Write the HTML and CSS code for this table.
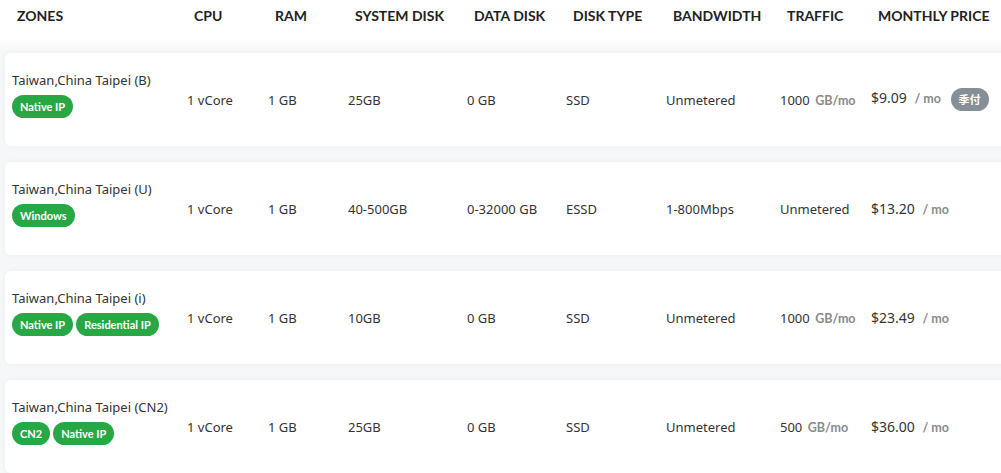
FILE: index.html
```html
<!DOCTYPE html>
<html lang="en">
<head>
    <meta charset="UTF-8">
    <meta name="viewport" content="width=device-width, initial-scale=1.0">
    <title>Pricing</title>
    <link rel="stylesheet" href="styles.css">
</head>
<body>
    <div class="price-table">
        <div class="table-head">
            <div>ZONES</div>
            <div>CPU</div>
            <div>RAM</div>
            <div>SYSTEM DISK</div>
            <div>DATA DISK</div>
            <div>DISK TYPE</div>
            <div>BANDWIDTH</div>
            <div>TRAFFIC</div>
            <div>MONTHLY PRICE</div>
        </div>
        <div class="table-body">
            <div class="plan-row">
                <div class="zone">
                    <span class="zone-name">Taiwan,China Taipei (B)</span>
                    <div class="tags"><span class="tag">Native IP</span></div>
                </div>
                <div>1 vCore</div>
                <div>1 GB</div>
                <div>25GB</div>
                <div>0 GB</div>
                <div>SSD</div>
                <div>Unmetered</div>
                <div>1000 <span class="unit">GB/mo</span></div>
                <div class="price">$9.09 <span class="unit">/ mo</span> <span class="tag tag-gray">季付</span></div>
            </div>
            <div class="plan-row">
                <div class="zone">
                    <span class="zone-name">Taiwan,China Taipei (U)</span>
                    <div class="tags"><span class="tag">Windows</span></div>
                </div>
                <div>1 vCore</div>
                <div>1 GB</div>
                <div>40-500GB</div>
                <div>0-32000 GB</div>
                <div>ESSD</div>
                <div>1-800Mbps</div>
                <div>Unmetered</div>
                <div class="price">$13.20 <span class="unit">/ mo</span></div>
            </div>
            <div class="plan-row">
                <div class="zone">
                    <span class="zone-name">Taiwan,China Taipei (i)</span>
                    <div class="tags"><span class="tag">Native IP</span><span class="tag">Residential IP</span></div>
                </div>
                <div>1 vCore</div>
                <div>1 GB</div>
                <div>10GB</div>
                <div>0 GB</div>
                <div>SSD</div>
                <div>Unmetered</div>
                <div>1000 <span class="unit">GB/mo</span></div>
                <div class="price">$23.49 <span class="unit">/ mo</span></div>
            </div>
            <div class="plan-row">
                <div class="zone">
                    <span class="zone-name">Taiwan,China Taipei (CN2)</span>
                    <div class="tags"><span class="tag">CN2</span><span class="tag">Native IP</span></div>
                </div>
                <div>1 vCore</div>
                <div>1 GB</div>
                <div>25GB</div>
                <div>0 GB</div>
                <div>SSD</div>
                <div>Unmetered</div>
                <div>500 <span class="unit">GB/mo</span></div>
                <div class="price">$36.00 <span class="unit">/ mo</span></div>
            </div>
        </div>
    </div>
</body>
</html>
```
FILE: styles.css
```css
body {
    margin: 0;
    background: #fff;
    font-family: "Noto Sans", Arial, sans-serif;
    color: #333;
    overflow: hidden;
}
.price-table {
    width: 1020px;
}
.table-head,
.plan-row {
    display: grid;
    grid-template-columns: 175px 81px 80px 119px 99px 100px 114px 91px 1fr;
    align-items: center;
}
.table-head {
    height: 31px;
    padding: 0 0 8px 12px;
    font-family: "Lato", "Noto Sans", sans-serif;
    font-weight: 700;
    font-size: 14px;
    color: #222;
}
.table-head div {
    padding-left: 7px;
}
.table-head div:first-child {
    padding-left: 5px;
}
.table-body {
    background: linear-gradient(#fff, #f6f7f9 12px);
    padding: 14px 0 0 5px;
    display: flex;
    flex-direction: column;
    gap: 16px;
}
.plan-row {
    background: #fff;
    height: 93px;
    padding-left: 7px;
    border-radius: 6px;
    box-shadow: 0 0 6px rgba(0, 0, 0, 0.04);
    font-size: 13px;
}
.zone {
    display: flex;
    flex-direction: column;
    gap: 6px;
    padding-bottom: 10px;
}
.zone-name {
    font-size: 13px;
}
.tags {
    display: flex;
    gap: 3px;
}
.tag {
    display: inline-block;
    background: #28a745;
    color: #fff;
    font-family: "Lato", "Noto Sans", "Noto Sans CJK SC", sans-serif;
    font-weight: 700;
    font-size: 11px;
    line-height: 23px;
    padding: 0 8px;
    border-radius: 12px;
}
.tag-gray {
    background: #868e96;
    margin-left: 6px;
    vertical-align: middle;
}
.unit {
    color: #8a8a8a;
    font-family: "Lato", "Noto Sans", sans-serif;
    font-weight: 700;
    font-size: 12.5px;
    margin-left: 2px;
}
.price {
    font-size: 14px;
}
.price .unit {
    margin-left: 4px;
}
```
